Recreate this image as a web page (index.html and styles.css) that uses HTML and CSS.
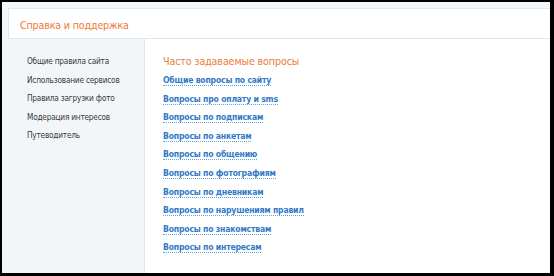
FILE: index.html
```html
<!DOCTYPE html>
<html lang="ru">
<head>
<meta charset="utf-8">
<link rel="stylesheet" href="styles.css">
</head>
<body>
<div class="page">
  <div class="header"><span class="title">Справка и поддержка</span></div>
  <div class="row">
    <ul class="side">
      <li>Общие правила сайта</li>
      <li>Использование сервисов</li>
      <li>Правила загрузки фото</li>
      <li>Модерация интересов</li>
      <li>Путеводитель</li>
    </ul>
    <div class="main">
      <div class="heading">Часто задаваемые вопросы</div>
      <ul class="links">
        <li><a href="#">Общие вопросы по сайту</a></li>
        <li><a href="#">Вопросы про оплату и sms</a></li>
        <li><a href="#">Вопросы по подпискам</a></li>
        <li><a href="#">Вопросы по анкетам</a></li>
        <li><a href="#">Вопросы по общению</a></li>
        <li><a href="#">Вопросы по фотографиям</a></li>
        <li><a href="#">Вопросы по дневникам</a></li>
        <li><a href="#">Вопросы по нарушениям правил</a></li>
        <li><a href="#">Вопросы по знакомствам</a></li>
        <li><a href="#">Вопросы по интересам</a></li>
      </ul>
    </div>
  </div>
</div>
</body>
</html>
```
FILE: styles.css
```css
html, body {
  margin: 0;
  padding: 0;
  background: #000;
}
body {
  width: 554px;
  height: 276px;
  box-sizing: border-box;
  padding: 2px 4px 3px 2px;
  overflow: hidden;
  font-family: "DejaVu Sans Condensed", "DejaVu Sans", sans-serif;
}
.page {
  height: 271px;
  background: #f3f6f9;
  padding-top: 6px;
  box-sizing: border-box;
  overflow: hidden;
  display: flex;
  flex-direction: column;
}
.header {
  margin-left: 6px;
  margin-right: -1px;
  height: 31px;
  box-sizing: border-box;
  background: #fff;
  border: 1px solid #e1e6ec;
  display: flex;
  align-items: center;
  padding: 2px 0 0 11px;
}
.title {
  color: #ee7a3a;
  font-size: 10.6px;
  letter-spacing: -0.15px;
}
.row {
  flex: 1;
  display: flex;
}
.side {
  list-style: none;
  margin: 0;
  padding: 13px 0 0 25px;
  width: 142px;
  box-sizing: border-box;
}
.side li {
  font-size: 8.2px;
  letter-spacing: -0.2px;
  color: #383838;
  line-height: 18.5px;
}
.main {
  flex: 1;
  background: #fff;
  border-left: 1px solid #dfe5ec;
  padding: 13px 0 0 18px;
}
.heading {
  color: #ee7a3a;
  font-size: 10.6px;
  letter-spacing: -0.1px;
  line-height: 18px;
}
.links {
  list-style: none;
  margin: 0;
  padding: 1px 0 0;
}
.links li {
  line-height: 18.6px;
  font-size: 8.6px;
  letter-spacing: -0.2px;
}
.links a {
  color: #3279c6;
  font-weight: bold;
  text-decoration: none;
  border-bottom: 1px dotted #5aa5e6;
}
```
